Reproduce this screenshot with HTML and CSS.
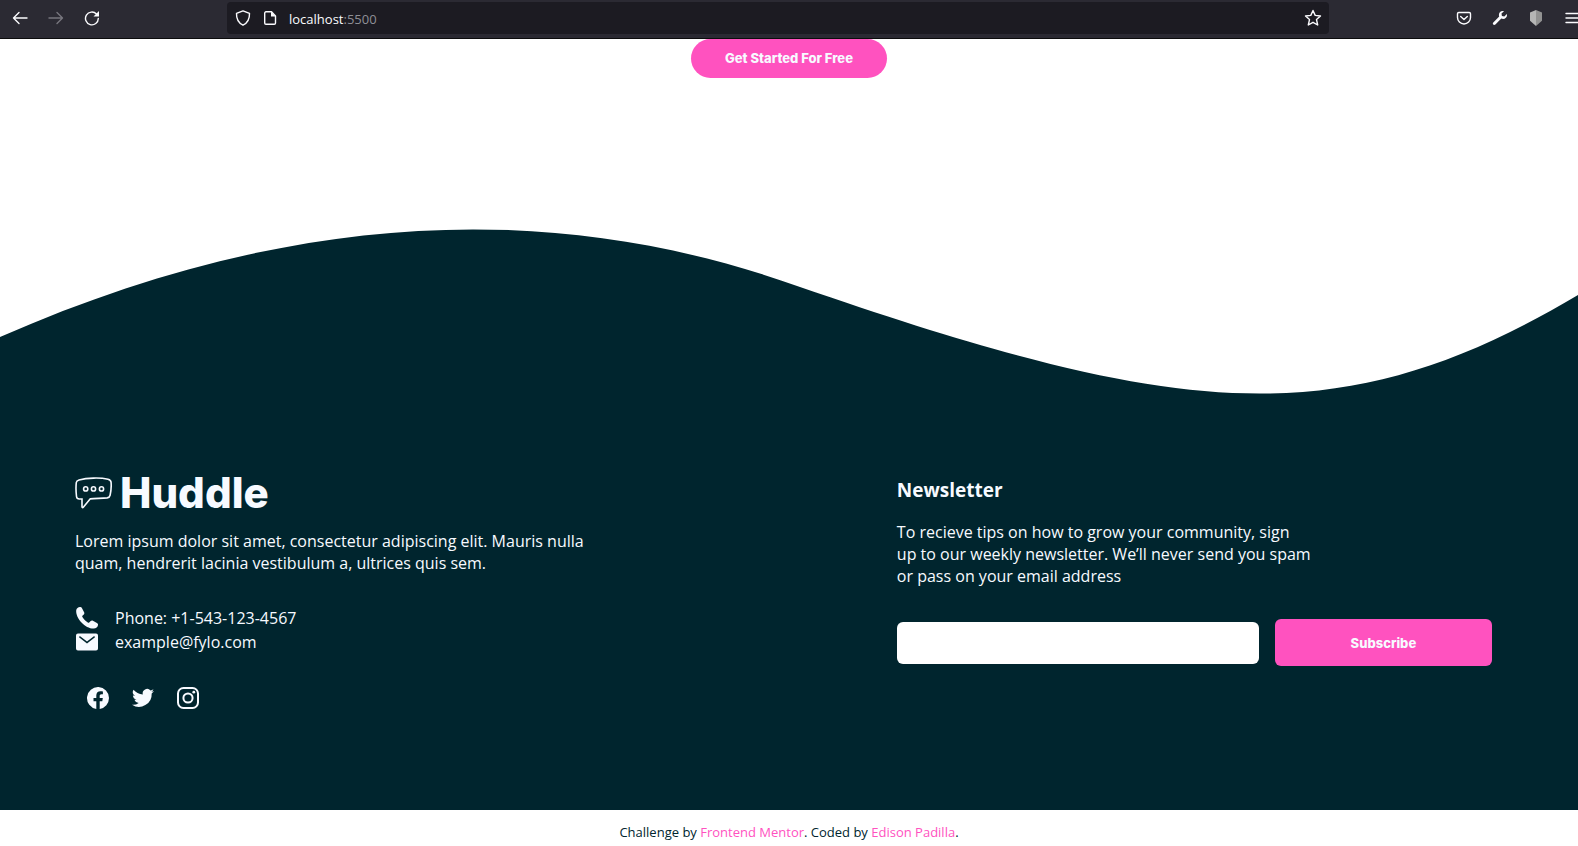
FILE: index.html
```html
<!DOCTYPE html>
<html lang="en">
<head>
<meta charset="utf-8">
<title>Huddle</title>
<link rel="stylesheet" href="styles.css">
</head>
<body>
<div class="toolbar">
  <div class="nav">
    <button class="tool" aria-label="Back"><svg width="16" height="16" viewBox="0 0 16 16"><path d="M15 8H1.500M7 2.500 1.500 8 7 13.500"/></svg></button>
    <button class="tool dim" aria-label="Forward"><svg width="16" height="16" viewBox="0 0 16 16"><path d="M1 8h13.500M9 2.500 14.500 8 9 13.500"/></svg></button>
    <button class="tool" aria-label="Reload"><svg width="16" height="16" viewBox="0 0 16 16"><path d="M14.300 8.500A6.400 6.400 0 1 1 12.500 4"/><path class="fill" d="M15 1v5.500H9.500z"/></svg></button>
  </div>
  <div class="address">
    <svg width="16" height="16" viewBox="0 0 16 16"><path d="M8 .9 14.500 3.300C14.700 8.800 12.600 13 8 15.200 3.400 13 1.300 8.800 1.500 3.300z"/></svg>
    <svg width="16" height="16" viewBox="0 0 16 16"><path d="M4 1.800h5.500L13.500 6v7a1.300 1.300 0 0 1-1.300 1.300H4A1.300 1.300 0 0 1 2.700 13V3.100A1.300 1.300 0 0 1 4 1.800z"/><path class="fill" d="M9 1.500V6.500h4.700z"/></svg>
    <span class="url">localhost<span class="port">:5500</span></span>
    <button class="star" aria-label="Bookmark"><svg width="18" height="18" viewBox="0 0 18 18"><path d="m9 1.500 2.200 4.900 5.300.6-4 3.600 1.200 5.400L9 13.300 4.300 16l1.200-5.400-4-3.600 5.300-.6z"/></svg></button>
  </div>
  <div class="extras">
    <button class="tool" aria-label="Pocket"><svg width="16" height="16" viewBox="0 0 16 16"><path d="M2.800 2.500h10.400c.8 0 1.300.5 1.300 1.300v3.700a6.500 6.500 0 0 1-13 0V3.800c0-.8.5-1.300 1.300-1.300zM4.700 6.500 8 9.500l3.300-3"/></svg></button>
    <button class="tool" aria-label="Developer tools"><svg width="16" height="16" viewBox="0 0 16 16"><path class="fill" d="M14.800 4.100 12.300 6.400 9.900 5.900 9.500 3.600 12 1.200C9.800.3 6.900 1.700 6.900 4.900c0 .5.100 1 .3 1.500L1.300 12.500c-1.400 1.600.6 3.300 2.100 2L9.300 8.600c3.700 1.300 6.400-1.600 5.500-4.500z"/></svg></button>
    <button class="tool" aria-label="Extension"><svg width="16" height="18" viewBox="0 0 16 18"><path class="shield-light" d="M8 1 2 3.500v8.300L8 17z"/><path class="shield-dark" d="m8 1 6 2.500v8.300L8 17z"/></svg></button>
    <button class="tool" aria-label="Menu"><svg width="16" height="16" viewBox="0 0 16 16"><path d="M2 3.500h13M2 8h13M2 12.500h13"/></svg></button>
  </div>
</div>

<main class="hero">
  <button class="cta">Get Started For Free</button>
</main>

<footer class="footer">
  <svg class="wave" viewBox="0 229 1578 168" preserveAspectRatio="none" aria-hidden="true"><path d="M0 337C267 220 533 191 800 287C1185 420 1342 435 1578 295V398H0z"/></svg>
  <div class="columns">
    <section class="about">
      <div class="logo">
        <svg width="37" height="32" viewBox="0 0 37 32" aria-hidden="true"><path d="M4 3C12 .8 25 .4 33 2.200c2 .5 3 1.400 3.100 3.300.3 4.500 0 8.500-1 12.700-.4 1.700-1.400 2.500-3 2.700-5.500.5-11.500.5-17 1L8.300 30.200c-.6.700-1.300.4-1.300-.4V22H4.300c-1.700 0-2.600-.8-2.800-2.500C.9 14.500.8 10 1.300 5.500 1.500 4.100 2.500 3.400 4 3z"/><circle cx="10.700" cy="11.900" r="2.100"/><circle cx="18.500" cy="11.900" r="2.100"/><circle cx="26.500" cy="11.900" r="2.100"/></svg>
        <span>Huddle</span>
      </div>
      <p class="blurb">Lorem ipsum dolor sit amet, consectetur adipiscing elit. Mauris nulla quam, hendrerit lacinia vestibulum a, ultrices quis sem.</p>
      <ul class="contact">
        <li><svg width="24" height="24" viewBox="0 0 24 24" aria-hidden="true"><path d="M1.200 4.500C1.400 2.200 3.500.8 5.300 1c.8.100 1.300.5 1.700 1.200l2.100 4c.4.800.3 1.600-.3 2.200L7.400 9.700c-.3.400-.3.900 0 1.300 1.300 2.200 3 4 5.400 5.500.5.300 1 .3 1.400-.1l1.500-1.300c.7-.6 1.400-.7 2.200-.3l4 2.300c.9.500 1.200 1.100 1.100 1.900-.3 2-1.900 3.600-4.300 3.600C10.500 22.800.6 12.500 1.200 4.500z"/></svg>Phone: +1-543-123-4567</li>
        <li><svg width="24" height="24" viewBox="0 0 24 24" aria-hidden="true"><path fill-rule="evenodd" d="M3 3.500h18A2 2 0 0 1 23 5.500v13a2 2 0 0 1-2 2H3a2 2 0 0 1-2-2v-13a2 2 0 0 1 2-2zM4.800 6 4 7.200l8 6.300 8-6.300L19.200 6 12 11.600z"/></svg>example@fylo.com</li>
      </ul>
      <div class="social">
        <a href="#" aria-label="Facebook"><svg width="24" height="24" viewBox="0 0 24 24"><path d="M23 12a11 11 0 1 0-12.700 10.900v-7.700H7.500V12h2.800V9.600c0-2.800 1.600-4.300 4.100-4.300 1.200 0 2.500.2 2.500.2v2.700h-1.400c-1.400 0-1.800.9-1.800 1.700V12h3.100l-.5 3.200h-2.600v7.700A11 11 0 0 0 23 12z"/></svg></a>
        <a href="#" aria-label="Twitter"><svg width="24" height="24" viewBox="0 0 24 24"><path d="M23 5.100c-.8.400-1.700.6-2.600.7.900-.6 1.700-1.400 2-2.500-.9.500-1.800.9-2.900 1.100a4.500 4.500 0 0 0-7.700 4.100C8.100 8.300 4.700 6.500 2.500 3.800a4.500 4.500 0 0 0 1.400 6c-.7 0-1.400-.2-2-.6v.1c0 2.200 1.500 4 3.600 4.400-.7.200-1.400.2-2 .1.600 1.800 2.200 3.100 4.200 3.100A9 9 0 0 1 1 18.800a12.800 12.800 0 0 0 19.700-11.400c.9-.6 1.700-1.400 2.300-2.300z"/></svg></a>
        <a href="#" aria-label="Instagram"><svg class="outline" width="24" height="24" viewBox="0 0 24 24"><rect x="2" y="2" width="20" height="20" rx="5.500"/><circle cx="12" cy="12" r="4.600"/><circle class="dot" cx="17.800" cy="6.200" r="1.400"/></svg></a>
      </div>
    </section>
    <section class="newsletter">
      <h2>Newsletter</h2>
      <p>To recieve tips on how to grow your community, sign<br>up to our weekly newsletter. We’ll never send you spam<br>or pass on your email address</p>
      <form class="signup">
        <input type="email" aria-label="Email address">
        <button type="button">Subscribe</button>
      </form>
    </section>
  </div>
</footer>
<div class="attribution">Challenge by <a href="#">Frontend Mentor</a>. Coded by <a href="#">Edison Padilla</a>.</div>
</body>
</html>
```

FILE: styles.css
```css
* { box-sizing: border-box; }

body {
  margin: 0;
  background: #fff;
  color: #00252e;
  font: 16px/22px "Open Sans", "Noto Sans", sans-serif;
}

h2, p, ul { margin: 0; padding: 0; }
button, input { font: inherit; border: 0; padding: 0; }
button { cursor: pointer; }
a { color: #ff52bf; text-decoration: none; }
svg { display: block; flex: none; }

/* Browser toolbar */
.toolbar {
  display: flex;
  height: 39px;
  padding-top: 2px;
  background: #2b2a33;
  border-bottom: 1px solid #0c0c0d;
  color: #fbfbfe;
  overflow: hidden;
}
.toolbar svg { fill: none; stroke: currentColor; stroke-width: 1.4; stroke-linejoin: round; stroke-linecap: round; }
.toolbar .fill { fill: currentColor; stroke: none; }
.toolbar .shield-light { fill: #b5b5b5; stroke: none; }
.toolbar .shield-dark { fill: #929292; stroke: none; }
.nav, .extras { display: flex; align-items: center; height: 32px; flex: none; }
.nav { width: 227px; padding-left: 2px; }
.extras { width: 249px; padding-left: 117px; }
.tool {
  display: grid;
  place-items: center;
  flex: none;
  width: 36px;
  height: 32px;
  background: none;
  color: inherit;
}
.tool.dim { color: #77767e; }
.address {
  display: flex;
  align-items: center;
  flex: 1;
  gap: 11px;
  height: 32px;
  padding: 0 7px 0 8px;
  border-radius: 4px;
  background: #1c1b22;
}
.url { flex: 1; font-size: 13px; line-height: 20px; padding-top: 2px; }
.port { color: #8f8f96; }
.star { background: none; color: inherit; }

/* Call to action */
.hero { display: flex; justify-content: center; padding-bottom: 151px; }
.cta {
  width: 196px;
  height: 39px;
  padding-bottom: 2px;
  border-radius: 20px;
  background: #ff52bf;
  color: #f7faff;
  font: 800 13px/20px Inter, sans-serif;
}

/* Footer */
.footer { color: #f7faff; }
.wave { width: 100%; height: 168px; fill: #00252e; }
.columns {
  display: grid;
  grid-template-columns: 58fr 42fr;
  padding: 79px 86px 100px 75px;
  background: #00252e;
}
.logo { display: flex; align-items: center; gap: 8px; height: 34px; }
.logo svg { fill: none; stroke: currentColor; stroke-width: 1.6; }
.logo span { font: 800 42px/34px Inter, sans-serif; }
.blurb { max-width: 540px; margin-top: 20px; }
.contact { margin-top: 32px; list-style: none; }
.contact li { display: flex; align-items: center; gap: 16px; height: 24px; }
.contact svg, .social svg { fill: currentColor; }
.social { display: flex; gap: 21px; margin-top: 32px; padding-left: 11px; }
.social a { color: inherit; }
.social .outline { fill: none; stroke: currentColor; stroke-width: 2; }
.social .dot { fill: currentColor; stroke: none; }

.newsletter h2 { font-size: 19px; line-height: 28px; }
.newsletter p { margin-top: 17px; }
.signup { display: flex; align-items: center; gap: 16px; margin-top: 32px; }
.signup input { flex: 5; min-width: 0; height: 42px; text-indent: 12px; border-radius: 6px; background: #fff; }
.signup button {
  flex: 3;
  height: 47px;
  border-radius: 6px;
  background: #ff52bf;
  color: #f7faff;
  font: 800 13px/20px Inter, sans-serif;
}

.attribution { padding: 12px 0 4px; text-align: center; font-size: 13px; line-height: 20px; }
```
